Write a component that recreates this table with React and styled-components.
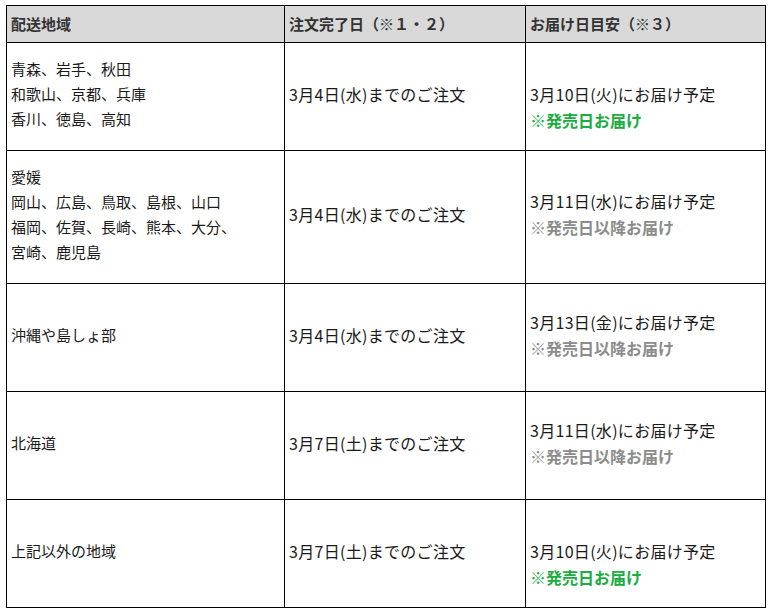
import React from "react";
import styled, { createGlobalStyle } from "styled-components";

const GlobalStyle = createGlobalStyle`
  body {
    margin: 0;
    padding: 5px 0 0 6px;
    background: #fff;
    font-family: "Noto Sans CJK JP", "Noto Sans", sans-serif;
    color: #1a1a1a;
  }
`;

const rows = [
  {
    areas: ["青森、岩手、秋田", "和歌山、京都、兵庫", "香川、徳島、高知"],
    order: "3月4日(水)までのご注文",
    delivery: "3月10日(火)にお届け予定",
    note: "※発売日お届け",
    onRelease: true,
    height: 108,
  },
  {
    areas: ["愛媛", "岡山、広島、鳥取、島根、山口", "福岡、佐賀、長崎、熊本、大分、", "宮崎、鹿児島"],
    order: "3月4日(水)までのご注文",
    delivery: "3月11日(水)にお届け予定",
    note: "※発売日以降お届け",
    onRelease: false,
    height: 133,
  },
  {
    areas: ["沖縄や島しょ部"],
    order: "3月4日(水)までのご注文",
    delivery: "3月13日(金)にお届け予定",
    note: "※発売日以降お届け",
    onRelease: false,
    height: 108,
  },
  {
    areas: ["北海道"],
    order: "3月7日(土)までのご注文",
    delivery: "3月11日(水)にお届け予定",
    note: "※発売日以降お届け",
    onRelease: false,
    height: 108,
  },
  {
    areas: ["上記以外の地域"],
    order: "3月7日(土)までのご注文",
    delivery: "3月10日(火)にお届け予定",
    note: "※発売日お届け",
    onRelease: true,
    height: 108,
  },
];

const App = () => {
  return (
    <>
      <GlobalStyle />
      <Table>
        <HeadCell>配送地域</HeadCell>
        <HeadCell>注文完了日（※１・２）</HeadCell>
        <HeadCell>お届け日目安（※３）</HeadCell>
        {rows.map((row, i) => (
          <React.Fragment key={i}>
            <AreaCell $height={row.height}>
              {row.areas.map((a) => (
                <div key={a}>{a}</div>
              ))}
            </AreaCell>
            <Cell $height={row.height}>{row.order}</Cell>
            <Cell $height={row.height}>
              {row.onRelease && <div>&nbsp;</div>}
              <div>{row.delivery}</div>
              <Note $green={row.onRelease}>{row.note}</Note>
            </Cell>
          </React.Fragment>
        ))}
      </Table>
    </>
  );
};

export default App;

const Table = styled.div`
  display: grid;
  grid-template-columns: 278px 241px 240px;
  width: 760px;
  border-top: 1px solid #000;
  border-left: 1px solid #000;
  box-sizing: border-box;
`;

const HeadCell = styled.div`
  height: 37px;
  box-sizing: border-box;
  display: flex;
  align-items: center;
  padding: 0 4px 2px;
  background: #d9d9d9;
  border-right: 1px solid #000;
  border-bottom: 1px solid #000;
  font-size: 15px;
  font-weight: bold;
  color: #333;
  white-space: nowrap;
`;

const Cell = styled.div`
  height: ${(p) => p.$height}px;
  box-sizing: border-box;
  display: flex;
  flex-direction: column;
  justify-content: center;
  padding: 0 4px 6px;
  border-right: 1px solid #000;
  border-bottom: 1px solid #000;
  font-size: 16px;
  line-height: 26px;
  letter-spacing: 0.3px;
  white-space: nowrap;
`;

const AreaCell = styled(Cell)`
  font-size: 15px;
  line-height: 25px;
  letter-spacing: 0;
`;

const Note = styled.div`
  font-size: 16px;
  font-weight: bold;
  letter-spacing: 0;
  color: ${(p) => (p.$green ? "#1aad3f" : "#8c8c8c")};
`;
